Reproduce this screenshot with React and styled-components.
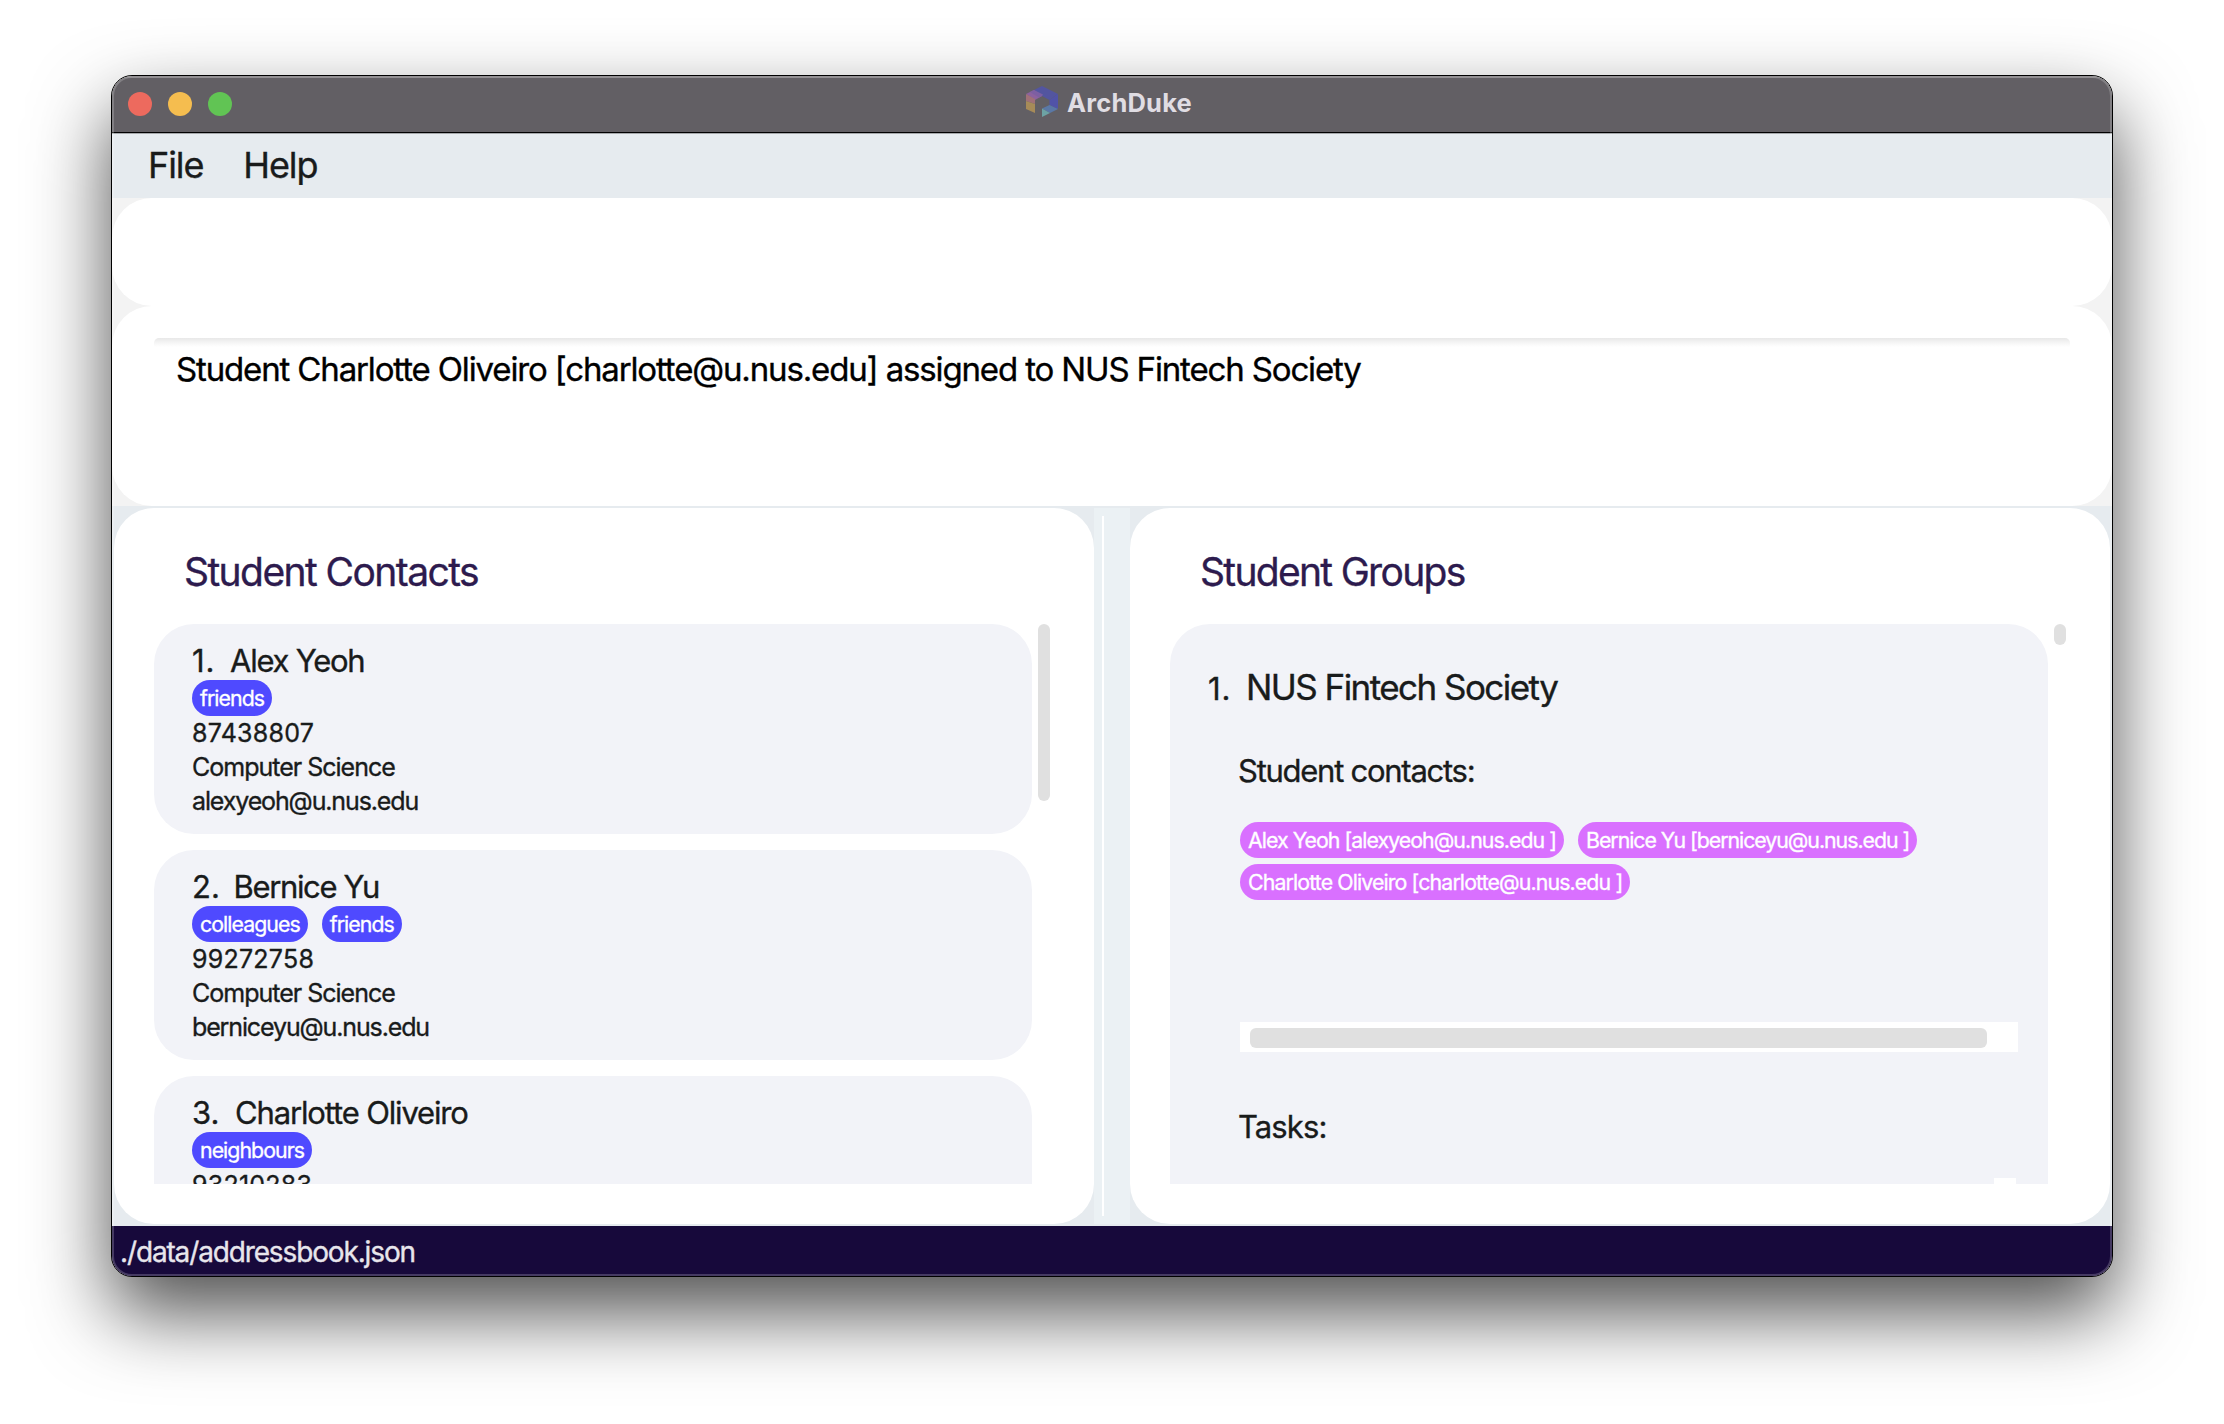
import React from 'react';
import styled, { createGlobalStyle } from 'styled-components';

const GlobalStyle = createGlobalStyle`
  *, *::before, *::after { box-sizing: border-box; }
  body {
    margin: 0;
    background: #ffffff;
    font-family: Inter, "Liberation Sans", sans-serif;
    color: #191b1b;
    -webkit-text-stroke: 0.35px currentColor;
  }
`;

const Desktop = styled.div`
  width: 2224px;
  height: 1424px;
  padding: 75px 0 0 111px;
  overflow: hidden;
`;

const Window = styled.div`
  position: relative;
  display: flex;
  flex-direction: column;
  width: 2002px;
  height: 1202px;
  border: 1px solid #000000;
  border-radius: 21px;
  overflow: hidden;
  background: #f3f3f3;
  box-shadow: 0 36px 78px rgba(0, 0, 0, 0.69);

  &::after {
    content: '';
    position: absolute;
    inset: 0;
    border-radius: 20px;
    box-shadow: inset 0 0 0 2px rgba(255, 255, 255, 0.2);
    pointer-events: none;
  }
`;

const TitleBar = styled.header`
  display: grid;
  grid-template-columns: 1fr auto 1fr;
  align-items: center;
  height: 58px;
  padding: 0 16px;
  background: #625f64;
  border-bottom: 1px solid #a5a8ab;
  box-shadow: inset 0 -1px 0 #000000, inset 0 2px 0 rgba(255, 255, 255, 0.14);
`;

const Lights = styled.div`
  display: flex;
  gap: 16px;
  padding-bottom: 1px;
`;

const Light = styled.span`
  width: 24px;
  height: 24px;
  border-radius: 50%;
  background: ${(p) => p.$color};
`;

const WindowTitle = styled.div`
  display: flex;
  align-items: center;
  gap: 9px;
  padding: 0 6px 3px 0;
  font-size: 25.5px;
  font-weight: 700;
  line-height: 30px;
  letter-spacing: 0.2px;
  color: #e0dde3;
  -webkit-text-stroke: 0;
`;

const Logo = styled.svg`
  display: block;
  width: 32px;
  height: 31px;
  margin-top: -3px;
`;

const MenuBar = styled.nav`
  display: flex;
  align-items: center;
  gap: 40px;
  height: 64px;
  padding: 0 36px 2px;
  background: #e6ebef;
`;

const MenuItem = styled.span`
  font-size: 36px;
  line-height: 44px;
  letter-spacing: -1.1px;
`;

const CommandBox = styled.div`
  height: 108px;
  border-radius: 40px;
  background: #ffffff;
`;

const ResultBox = styled.section`
  height: 200px;
  padding: 32px 42px;
  border-radius: 40px;
  background: #ffffff;
`;

const ResultText = styled.div`
  height: 136px;
  padding: 11px 22px;
  border-radius: 5px;
  background: linear-gradient(#e8e8e8, #f6f6f6 5px, #ffffff 9px);
  font-size: 33px;
  line-height: 40px;
  letter-spacing: -1.145px;
  color: #000000;
`;

const Panes = styled.main`
  display: flex;
  height: 720px;
  padding: 2px;
  background: #e6ebef;
`;

const Pane = styled.section`
  width: 980px;
  padding: 40px 28px 0 40px;
  border-radius: 40px;
  background: #ffffff;
`;

const Divider = styled.div`
  width: 36px;
  padding: 8px;
  background: #ebf1f4;

  &::before {
    content: '';
    display: block;
    width: 2px;
    height: 100%;
    background: #ffffff;
  }
`;

const PaneTitle = styled.h2`
  margin: 0 0 28px;
  padding-left: 30px;
  font-size: 39px;
  font-weight: 400;
  line-height: 48px;
  letter-spacing: ${(p) => p.$tracking};
  color: #2d1b4e;
`;

const Viewport = styled.div`
  display: flex;
  align-items: flex-start;
  gap: 6px;
  height: 560px;
  overflow: hidden;
`;

const List = styled.div`
  display: flex;
  flex-direction: column;
  gap: 16px;
  width: 878px;
`;

const Thumb = styled.div`
  width: 12px;
  height: ${(p) => p.$length}px;
  border-radius: 6px;
  background: #e0e0e0;
`;

const ContactCard = styled.article`
  height: 210px;
  padding: 18px 38px 16px;
  border-radius: 40px;
  background: #f2f3f8;
`;

const NameRow = styled.div`
  display: flex;
  align-items: baseline;
  font-size: 31px;
  line-height: 38px;
  white-space: nowrap;
`;

const Index = styled.span`
  flex: none;
  width: ${(p) => p.$width}px;
  font-size: 31px;
  letter-spacing: ${(p) => p.$tracking || 0}px;
`;

const ContactName = styled.span`
  letter-spacing: ${(p) => p.$tracking}px;
`;

const Tags = styled.div`
  display: flex;
  flex-wrap: wrap;
  align-content: flex-start;
  gap: 6px 14px;
`;

const Tag = styled.span`
  height: 36px;
  padding: 0 8px;
  border-radius: 18px;
  background: ${(p) => (p.$member ? '#d970ff' : '#4f4aff')};
  color: #ffffff;
  font-size: 21.3px;
  line-height: 36px;
  letter-spacing: ${(p) => p.$tracking || -0.94}px;
  white-space: nowrap;
`;

const Detail = styled.div`
  font-size: 25px;
  line-height: 34px;
  letter-spacing: ${(p) => p.$tracking}px;
`;

const GroupCard = styled.article`
  width: 878px;
  height: 1100px;
  padding: 41px 30px 0 38px;
  border-radius: 40px;
  background: #f2f3f8;
`;

const GroupHeading = styled.div`
  display: flex;
  align-items: baseline;
  height: 44px;
  line-height: 44px;
`;

const GroupName = styled.span`
  font-size: 35px;
  letter-spacing: -1.55px;
`;

const SectionLabel = styled.h3`
  margin: ${(p) => p.$top}px 0 32px 30px;
  font-size: 31px;
  font-weight: 400;
  line-height: 38px;
  letter-spacing: ${(p) => p.$tracking};
`;

const MemberArea = styled.div`
  height: 230px;
  width: 778px;
  margin-left: 32px;
  display: flex;
  flex-direction: column;
  justify-content: space-between;
`;

const HorizontalTrack = styled.div`
  height: 30px;
  padding: 6px 31px 4px 10px;
  background: #ffffff;

  &::before {
    content: '';
    display: block;
    height: 20px;
    border-radius: 6px;
    background: #e0e0e0;
  }
`;

const TaskArea = styled.div`
  display: flex;
  justify-content: flex-end;
  width: 776px;
  margin-left: 32px;
`;

const VerticalTrack = styled.div`
  width: 22px;
  height: 200px;
  background: #ffffff;
`;

const StatusBar = styled.footer`
  height: 50px;
  padding: 1px 0 0 8px;
  background: #17093b;
  color: #e8e6ec;
  font-size: 28px;
  line-height: 50px;
  letter-spacing: -1.14px;
`;

const contacts = [
  { index: '1.', indexWidth: 38, indexTracking: 1, name: 'Alex Yeoh', nameTracking: -1.24, tags: ['friends'], phone: '87438807', major: 'Computer Science', email: 'alexyeoh@u.nus.edu' },
  { index: '2.', indexWidth: 41.5, indexTracking: 0, name: 'Bernice Yu', nameTracking: -1.36, tags: ['colleagues', 'friends'], phone: '99272758', major: 'Computer Science', email: 'berniceyu@u.nus.edu' },
  { index: '3.', indexWidth: 43, indexTracking: 0, name: 'Charlotte Oliveiro', nameTracking: -1.15, tags: ['neighbours'], phone: '93210283' },
];

const members = [
  { label: 'Alex Yeoh [alexyeoh@u.nus.edu ]', tracking: -0.95 },
  { label: 'Bernice Yu [berniceyu@u.nus.edu ]', tracking: -1.02 },
  { label: 'Charlotte Oliveiro [charlotte@u.nus.edu ]', tracking: -0.87 },
];

function HexLogo() {
  return (
    <Logo viewBox="0 0 32 31">
      <path d="M16 0 32 8 23.5 14 16 10 8 4Z" fill="#5355a0" />
      <path d="M32 8V23L23.5 19V14Z" fill="#5153a8" />
      <path d="M8 4 16 10 9 14 0 8Z" fill="#8c629f" />
      <path d="M8 4 17 8.4 16 10 13 11.6 4 6Z" fill="#7d5fa2" />
      <path d="M0 8 9 13V18L0 15Z" fill="#a07078" />
      <path d="M0 15 9 18V27L0 23Z" fill="#a78b58" />
      <path d="M23.5 19 32 23 24 27 16 22.5Z" fill="#5a78a6" />
      <path d="M16 22.5 24 27 16 31Z" fill="#6da3a4" />
    </Logo>
  );
}

export default function App() {
  return (
    <>
      <GlobalStyle />
      <Desktop>
        <Window>
          <TitleBar>
            <Lights>
              <Light $color="#ed6a5e" />
              <Light $color="#f5bd4f" />
              <Light $color="#61c454" />
            </Lights>
            <WindowTitle>
              <HexLogo />
              ArchDuke
            </WindowTitle>
          </TitleBar>
          <MenuBar>
            <MenuItem>File</MenuItem>
            <MenuItem>Help</MenuItem>
          </MenuBar>
          <CommandBox />
          <ResultBox>
            <ResultText>
              Student Charlotte Oliveiro [charlotte@u.nus.edu] assigned to NUS Fintech Society
            </ResultText>
          </ResultBox>
          <Panes>
            <Pane>
              <PaneTitle $tracking="-1.58px">Student Contacts</PaneTitle>
              <Viewport>
                <List>
                  {contacts.map((c) => (
                    <ContactCard key={c.index}>
                      <NameRow>
                        <Index $width={c.indexWidth} $tracking={c.indexTracking}>{c.index}</Index>
                        <ContactName $tracking={c.nameTracking}>{c.name}</ContactName>
                      </NameRow>
                      <Tags>
                        {c.tags.map((t) => (
                          <Tag key={t}>{t}</Tag>
                        ))}
                      </Tags>
                      <Detail $tracking={0.24}>{c.phone}</Detail>
                      {c.major && <Detail $tracking={-1}>{c.major}</Detail>}
                      {c.email && <Detail $tracking={-1.13}>{c.email}</Detail>}
                    </ContactCard>
                  ))}
                </List>
                <Thumb $length={177} />
              </Viewport>
            </Pane>
            <Divider />
            <Pane>
              <PaneTitle $tracking="-1.69px">Student Groups</PaneTitle>
              <Viewport>
                <GroupCard>
                  <GroupHeading>
                    <Index $width={38} $tracking={1}>1.</Index>
                    <GroupName>NUS Fintech Society</GroupName>
                  </GroupHeading>
                  <SectionLabel $top={43} $tracking="-1.26px">Student contacts:</SectionLabel>
                  <MemberArea>
                    <Tags>
                      {members.map((m) => (
                        <Tag key={m.label} $member $tracking={m.tracking}>{m.label}</Tag>
                      ))}
                    </Tags>
                    <HorizontalTrack />
                  </MemberArea>
                  <SectionLabel $top={56} $tracking="-0.9px">Tasks:</SectionLabel>
                  <TaskArea>
                    <VerticalTrack />
                  </TaskArea>
                </GroupCard>
                <Thumb $length={21} />
              </Viewport>
            </Pane>
          </Panes>
          <StatusBar>./data/addressbook.json</StatusBar>
        </Window>
      </Desktop>
    </>
  );
}
